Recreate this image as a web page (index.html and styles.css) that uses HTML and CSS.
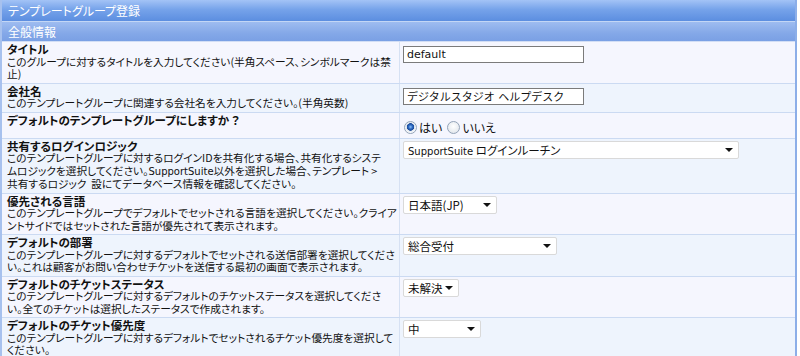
FILE: index.html
```html
<!DOCTYPE html>
<html lang="ja">
<head>
  <meta charset="UTF-8">
  <title>テンプレートグループ登録</title>
  <link rel="stylesheet" href="styles.css">
</head>
<body>
  <div class="panel">
    <div class="panel-title">テンプレートグループ登録</div>
    <div class="section-title">全般情報</div>

    <div class="form-row odd">
      <div class="label">
        <b>タイトル</b>
        <p>このグループに対するタイトルを入力してください(半角スペース、シンボルマークは禁<br>止)</p>
      </div>
      <div class="field"><input class="text" type="text" value="default"></div>
    </div>

    <div class="form-row even">
      <div class="label">
        <b>会社名</b>
        <p>このテンプレートグループに関連する会社名を入力してください。(半角英数)</p>
      </div>
      <div class="field"><input class="text" type="text" value="デジタルスタジオ ヘルプデスク"></div>
    </div>

    <div class="form-row odd">
      <div class="label">
        <b>デフォルトのテンプレートグループにしますか ？</b>
      </div>
      <div class="field radios">
        <label><input type="radio" name="isdefault" checked>はい</label>
        <label><input type="radio" name="isdefault">いいえ</label>
      </div>
    </div>

    <div class="form-row even">
      <div class="label">
        <b>共有するログインロジック</b>
        <p>このテンプレートグループに対するログインIDを共有化する場合、共有化するシステ<br>ムロジックを選択してください。<span class="latin">SupportSuite</span>以外を選択した場合、テンプレート &gt;<br>共有するロジック&nbsp;&nbsp;設にてデータベース情報を確認してください。</p>
      </div>
      <div class="field">
        <div class="select w-login"><span><span class="latin">SupportSuite</span> ログインルーチン</span><i class="arrow"></i></div>
      </div>
    </div>

    <div class="form-row odd">
      <div class="label">
        <b>優先される言語</b>
        <p>このテンプレートグループでデフォルトでセットされる言語を選択してください。クライア<br>ントサイドではセットされた言語が優先されて表示されます。</p>
      </div>
      <div class="field">
        <div class="select w-lang"><span>日本語(JP)</span><i class="arrow"></i></div>
      </div>
    </div>

    <div class="form-row even">
      <div class="label">
        <b>デフォルトの部署</b>
        <p>このテンプレートグループに対するデフォルトでセットされる送信部署を選択してくださ<br>い。これは顧客がお問い合わせチケットを送信する最初の画面で表示されます。</p>
      </div>
      <div class="field">
        <div class="select w-dept"><span>総合受付</span><i class="arrow"></i></div>
      </div>
    </div>

    <div class="form-row odd">
      <div class="label">
        <b>デフォルトのチケットステータス</b>
        <p>このテンプレートグループに対するデフォルトのチケットステータスを選択してくださ<br>い。全てのチケットは選択したステータスで作成されます。</p>
      </div>
      <div class="field">
        <div class="select w-status"><span>未解決</span><i class="arrow"></i></div>
      </div>
    </div>

    <div class="form-row even">
      <div class="label">
        <b>デフォルトのチケット優先度</b>
        <p>このテンプレートグループに対するデフォルトでセットされるチケット優先度を選択して<br>ください。</p>
      </div>
      <div class="field">
        <div class="select w-prio"><span>中</span><i class="arrow"></i></div>
      </div>
    </div>
  </div>
</body>
</html>
```

FILE: styles.css
```css
body {
  margin: 0;
  background: #fff;
  font-family: "Noto Sans CJK JP", sans-serif;
  font-size: 11px;
  color: #111;
  font-feature-settings: "palt";
}

.latin {
  font-family: "DejaVu Sans", sans-serif;
  font-size: 10px;
}

.panel {
  width: 797px;
  height: 356px;
  overflow: hidden;
  box-sizing: border-box;
  border-left: 2px solid #a7c1ee;
  border-right: 2px solid #8caee8;
}

.panel-title {
  height: 21px;
  line-height: 21px;
  padding-left: 6px;
  color: #fff;
  font-size: 12px;
  background: linear-gradient(#a3c3f6, #76a3ea 45%, #5c8ee0);
  border-bottom: 1px solid #c3d6f5;
}

.section-title {
  height: 19px;
  line-height: 19px;
  padding-left: 6px;
  color: #fff;
  font-size: 12px;
  background: linear-gradient(#9ebcf0, #84a8e8 60%, #7aa0e4);
  border-bottom: 1px solid #d2def5;
}

.form-row {
  display: grid;
  grid-template-columns: 398px 1fr;
  border-bottom: 1px solid #cbdaf2;
}

.form-row.odd { background: #f5f6fe; }
.form-row.even { background: #eef4fd; }

.label {
  padding: 1px 4px 2px 5px;
  border-right: 1px solid #d6e1f3;
  line-height: 12.5px;
  white-space: nowrap;
}

.label b {
  display: block;
  font-weight: bold;
  font-size: 11.5px;
}

.label p {
  margin: 0;
  font-size: 10.7px;
}

.field {
  padding: 2px 3px;
}

.text {
  display: block;
  box-sizing: border-box;
  width: 181px;
  height: 17px;
  margin: 2px 0 0;
  padding: 0 3px;
  border: 1px solid #7b7b7b;
  background: #fff;
  font-family: "DejaVu Sans", "Noto Sans CJK JP", sans-serif;
  font-size: 11px;
  color: #111;
}

.radios {
  display: flex;
  align-items: center;
  gap: 4px;
  padding-top: 6px;
}

.radios label {
  display: flex;
  align-items: center;
  gap: 2px;
  font-size: 12px;
}

.radios input {
  appearance: none;
  width: 13px;
  height: 13px;
  margin: 0 0 0 1px;
  border: 1px solid #93a3b8;
  border-radius: 50%;
  background: radial-gradient(circle at 50% 40%, #fff, #dbe1e8);
}

.radios input:checked {
  background: radial-gradient(circle at 50% 45%, #8fc2f6 0, #2d69c2 2px, #1d4b98 3.5px, #dfe6ee 4px, #fff 6px);
}

.select {
  display: flex;
  align-items: center;
  justify-content: space-between;
  box-sizing: border-box;
  height: 18px;
  padding: 0 5px 0 4px;
  border: 1px solid #d9d9d9;
  border-radius: 2px;
  background: #fff;
  font-size: 11.5px;
}

.arrow {
  width: 0;
  height: 0;
  border-left: 4px solid transparent;
  border-right: 4px solid transparent;
  border-top: 4px solid #111;
}

.w-login { width: 336px; }
.w-lang { width: 94px; }
.w-dept { width: 154px; }
.w-status { width: 56px; }
.w-prio { width: 78px; }
```
